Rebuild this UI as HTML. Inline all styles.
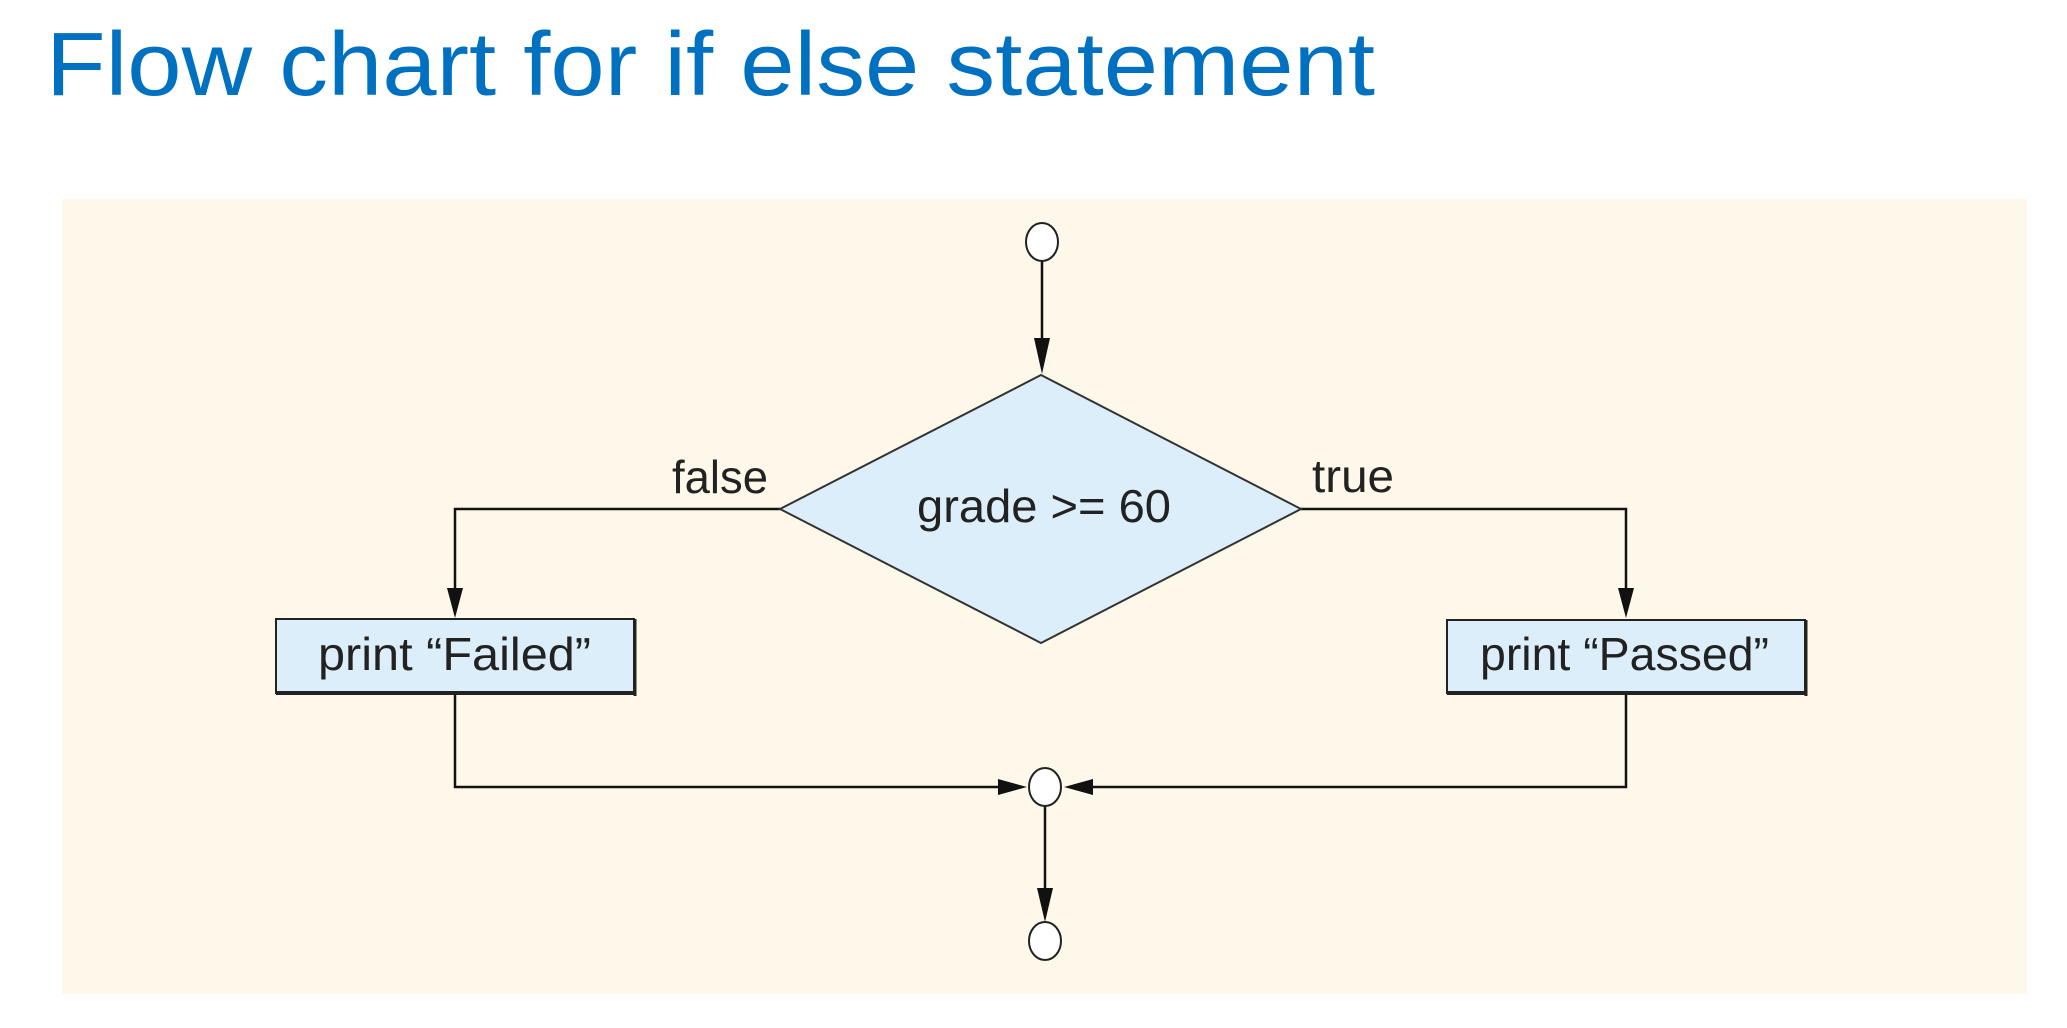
<!DOCTYPE html>
<html><head><meta charset="utf-8"><style>
html,body{margin:0;padding:0;background:#fff;width:2067px;height:1028px;overflow:hidden}
svg{position:absolute;left:0;top:0}
</style></head><body>
<svg width="2067" height="1028" viewBox="0 0 2067 1028">
<text x="46" y="95" font-family="Liberation Sans, sans-serif" font-size="90" fill="#0070C0" textLength="1329" lengthAdjust="spacingAndGlyphs">Flow chart for if else statement</text>
<rect x="62" y="199" width="1965" height="795" fill="#fef8ea"/>
<g stroke="#111" stroke-width="2.5" fill="none">
<line x1="1042" y1="261" x2="1042" y2="340"/>
<polyline points="780,509 455,509 455,590"/>
<polyline points="1301,509 1626,509 1626,590"/>
<polyline points="455,694 455,787 1002,787"/>
<polyline points="1626,694 1626,787 1090,787"/>
<line x1="1045" y1="806" x2="1045" y2="890"/>
</g>
<g fill="#111">
<polygon points="1034,338 1050,338 1042,374"/>
<polygon points="447,588 463,588 455,618"/>
<polygon points="1618,588 1634,588 1626,618"/>
<polygon points="998,779 998,795 1027,787"/>
<polygon points="1093,779 1093,795 1064,787"/>
<polygon points="1037,888 1053,888 1045,922"/>
</g>
<g fill="#fff" stroke="#222" stroke-width="2">
<ellipse cx="1042" cy="242" rx="16" ry="19"/>
<ellipse cx="1045" cy="787" rx="16" ry="19"/>
<ellipse cx="1045" cy="941" rx="16" ry="19"/>
</g>
<polygon points="1041,375 1301,509 1041,643 780,509" fill="#dbeef9" stroke="#333" stroke-width="2"/>
<rect x="276" y="619" width="358" height="74" fill="#dbeef9" stroke="#222" stroke-width="2"/>
<line x1="276" y1="693" x2="636" y2="693" stroke="#222" stroke-width="4"/>
<line x1="635" y1="619" x2="635" y2="696" stroke="#222" stroke-width="3"/>
<rect x="1447" y="620" width="358" height="73" fill="#dbeef9" stroke="#222" stroke-width="2"/>
<line x1="1447" y1="693" x2="1807" y2="693" stroke="#222" stroke-width="4"/>
<line x1="1806" y1="620" x2="1806" y2="696" stroke="#222" stroke-width="3"/>
<g font-family="Liberation Sans, sans-serif" font-size="46" fill="#222">
<text x="917" y="522" textLength="254" lengthAdjust="spacingAndGlyphs">grade &gt;= 60</text>
<text x="672" y="493" textLength="96" lengthAdjust="spacingAndGlyphs">false</text>
<text x="1312" y="492" textLength="82" lengthAdjust="spacingAndGlyphs">true</text>
<text x="318" y="670" textLength="273" lengthAdjust="spacingAndGlyphs">print “Failed”</text>
<text x="1480" y="670" textLength="289" lengthAdjust="spacingAndGlyphs">print “Passed”</text>
</g>
</svg>
</body></html>
